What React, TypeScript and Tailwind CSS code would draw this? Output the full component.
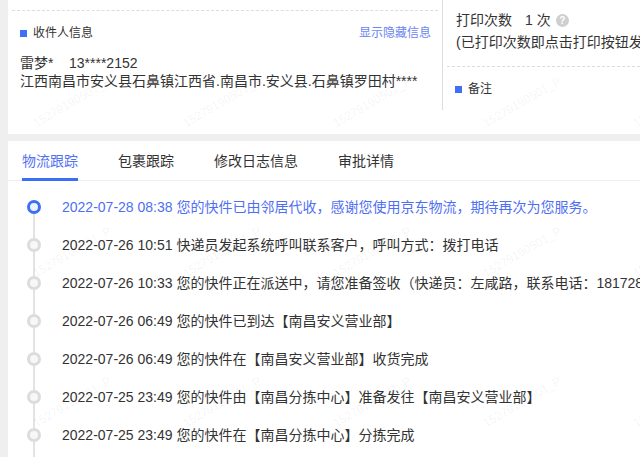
import React from 'react';

const FONT = { fontFamily: '"Liberation Sans", "Noto Sans CJK SC", sans-serif' };

const events = [
  { time: '2022-07-28 08:38', text: '您的快件已由邻居代收，感谢您使用京东物流，期待再次为您服务。' },
  { time: '2022-07-26 10:51', text: '快递员发起系统呼叫联系客户，呼叫方式：拨打电话' },
  { time: '2022-07-26 10:33', text: '您的快件正在派送中，请您准备签收（快递员：左咸路，联系电话：18172853019）' },
  { time: '2022-07-26 06:49', text: '您的快件已到达【南昌安义营业部】' },
  { time: '2022-07-26 06:49', text: '您的快件在【南昌安义营业部】收货完成' },
  { time: '2022-07-25 23:49', text: '您的快件由【南昌分拣中心】准备发往【南昌安义营业部】' },
  { time: '2022-07-25 23:49', text: '您的快件在【南昌分拣中心】分拣完成' },
];

const tabs = ['物流跟踪', '包裹跟踪', '修改日志信息', '审批详情'];

const Watermarks = () => {
  const marks: { x: number; y: number }[] = [];
  for (let r = 0; r < 3; r++) {
    for (let c = 0; c < 5; c++) {
      marks.push({ x: 70 + c * 150, y: 102 + r * 150 });
    }
  }
  return (
    <div className="absolute inset-0 pointer-events-none overflow-hidden">
      {marks.map((m, i) => (
        <span
          key={i}
          className="absolute text-[12px] leading-none whitespace-nowrap text-black/[0.06] -rotate-30"
          style={{ left: m.x - 42, top: m.y - 6 }}
        >
          15279190501_P
        </span>
      ))}
    </div>
  );
};

export default function App() {
  return (
    <div className="relative w-[640px] h-[457px] overflow-hidden bg-[#efefef] pl-2 text-[#333]" style={FONT}>
      <div className="flex flex-col h-full gap-[7px]">
        {/* 上方信息区 */}
        <div className="bg-white h-[134px] flex shrink-0">
          <div className="w-[434px] shrink-0 pt-[10px]">
            <div className="mx-1 border-t border-dashed border-[#ddd]" />
            <div className="flex items-center justify-between pl-3 pr-[11px] mt-[14px] h-4">
              <div className="flex items-center gap-[6px]">
                <span className="w-[7px] h-[7px] bg-[#3e6ff5]" />
                <span className="text-[12px] leading-4">收件人信息</span>
              </div>
              <span className="text-[12px] leading-4 text-[#6b84f3]">显示隐藏信息</span>
            </div>
            <div className="pl-3 mt-[13px] text-[14px] leading-[18px] whitespace-nowrap">
              <div>雷梦*&nbsp;&nbsp;&nbsp;&nbsp;13****2152</div>
              <div>江西南昌市安义县石鼻镇江西省.南昌市.安义县.石鼻镇罗田村****</div>
            </div>
          </div>
          <div className="w-px h-[110px] shrink-0 bg-[#ddd]" />
          <div className="flex-1 min-w-0 pt-[9px] overflow-hidden">
            <div className="pl-[13px] text-[14px] leading-[22px] whitespace-nowrap">
              <div className="flex items-center">
                <span>打印次数</span>
                <span className="ml-[13px]">1 次</span>
                <span className="ml-[5px] w-[13px] h-[13px] rounded-full bg-[#cfcfcf] text-white text-[10px] leading-[13px] font-bold flex items-center justify-center">
                  ?
                </span>
              </div>
              <div>(已打印次数即点击打印按钮发起打印的次数)</div>
            </div>
            <div className="ml-1 mt-[13px] border-t border-dashed border-[#ddd]" />
            <div className="flex items-center gap-[6px] pl-3 mt-[14px]">
              <span className="w-[7px] h-[7px] bg-[#3e6ff5]" />
              <span className="text-[12px] leading-4">备注</span>
            </div>
          </div>
        </div>

        {/* 物流信息 */}
        <div className="bg-white flex-1 flex flex-col min-h-0">
          <div className="flex gap-10 pl-[14px] border-b border-[#eee] shrink-0">
            {tabs.map((t, i) => (
              <div
                key={t}
                className={`pt-[9px] pb-[6px] -mb-px text-[14px] leading-[22px] border-b-[3px] ${
                  i === 0 ? 'border-[#3b6ef6] text-[#5470f2]' : 'border-transparent text-[#333]'
                }`}
              >
                {t}
              </div>
            ))}
          </div>
          <div className="pt-[7px] pl-[14px] flex-1 flex flex-col">
            {events.map((e, i) => (
              <div key={i} className="flex h-[38px] shrink-0">
                <div className="w-[24px] shrink-0 flex flex-col items-center">
                  <div className={`flex-1 w-[2px] ${i === 0 ? '' : 'bg-[#e3e3e3]'}`} />
                  <div
                    className={`w-[14px] h-[14px] shrink-0 rounded-full border-[3px] ${
                      i === 0 ? 'border-[#3e6ff5] bg-[#eef2ff]' : 'border-[#dcdcdc] bg-[#f7f7f7]'
                    }`}
                  />
                  <div className="flex-1 w-[2px] bg-[#e3e3e3]" />
                </div>
                <div
                  className={`ml-[16px] flex items-center text-[14px] whitespace-nowrap ${
                    i === 0 ? 'text-[#4f6ff2]' : 'text-[#333]'
                  }`}
                >
                  {e.time} {e.text}
                </div>
              </div>
            ))}
            <div className="w-[24px] flex-1 flex justify-center">
              <div className="w-[2px] bg-[#e3e3e3]" />
            </div>
          </div>
        </div>
      </div>
      <Watermarks />
    </div>
  );
}
